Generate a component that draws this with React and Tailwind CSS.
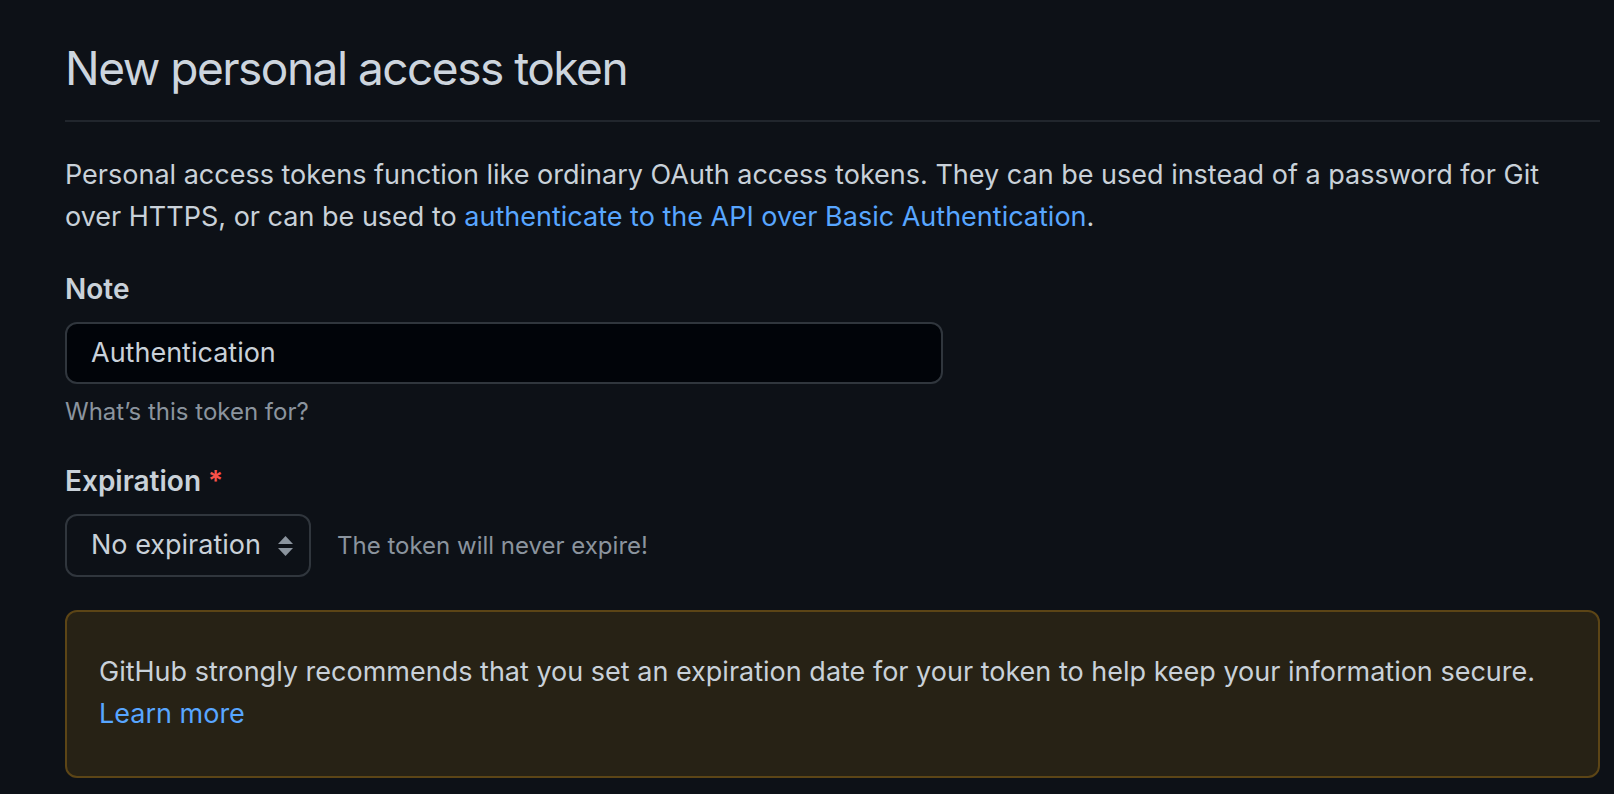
export default function App() {
  return (
    <div
      className="min-h-screen bg-[#0d1117] text-[#c9d1d9] pt-8"
      style={{ fontFamily: 'Inter, "Noto Sans", sans-serif' }}
    >
      <div className="ml-[65px] w-[1535px]">
        {/* Subhead */}
        <div className="border-b-2 border-[#21262d] pb-4 mb-8">
          <h2 className="text-[46px] leading-[72px] font-normal tracking-[-1.5px] text-[#cdd5de]">New personal access token</h2>
        </div>

        <p className="text-[27px] leading-[42px]">
          Personal access tokens function like ordinary OAuth access tokens. They can be used instead of a password for Git
          over HTTPS, or can be used to{' '}
          <a href="#" className="text-[#58a6ff]">authenticate to the API over Basic Authentication</a>.
        </p>

        {/* Note */}
        <div className="mt-[30px]">
          <label className="block text-[28px] leading-[42px] font-semibold">Note</label>
          <div className="mt-3 w-[878px] h-[62px] flex items-center px-6 rounded-xl border-2 border-[#30363d] bg-[#010409] text-[27px] text-[#c9d1d9]">
            Authentication
          </div>
          <p className="mt-[10px] text-[24px] leading-[36px] text-[#8b949e]">What’s this token for?</p>
        </div>

        {/* Expiration */}
        <div className="mt-[30px]">
          <label className="block text-[28px] leading-[42px] font-semibold">
            Expiration <span className="text-[#f85149]">*</span>
          </label>
          <div className="mt-3 flex items-center gap-[26px]">
            <div className="w-[246px] h-[63px] flex items-center justify-between pl-6 pr-4 rounded-xl border-2 border-[#30363d] bg-[#0d1117] text-[27px] text-[#c9d1d9]">
              <span>No expiration</span>
              <svg width="15" height="20" viewBox="0 0 15 20" fill="#8b949e">
                <path d="M7.5 0 L15 8 L0 8 Z" />
                <path d="M0 12 L15 12 L7.5 20 Z" />
              </svg>
            </div>
            <span className="text-[24px] text-[#8b949e]">The token will never expire!</span>
          </div>
        </div>

        {/* Flash warning */}
        <div className="mt-[33px] rounded-xl border-2 border-[#5c4516] bg-[#272215] px-8 pt-[39px] pb-[41px] text-[27px] leading-[42px] text-[#c9d1d9]">
          GitHub strongly recommends that you set an expiration date for your token to help keep your information secure.
          <br />
          <a href="#" className="text-[#58a6ff]">Learn more</a>
        </div>
      </div>
    </div>
  )
}
